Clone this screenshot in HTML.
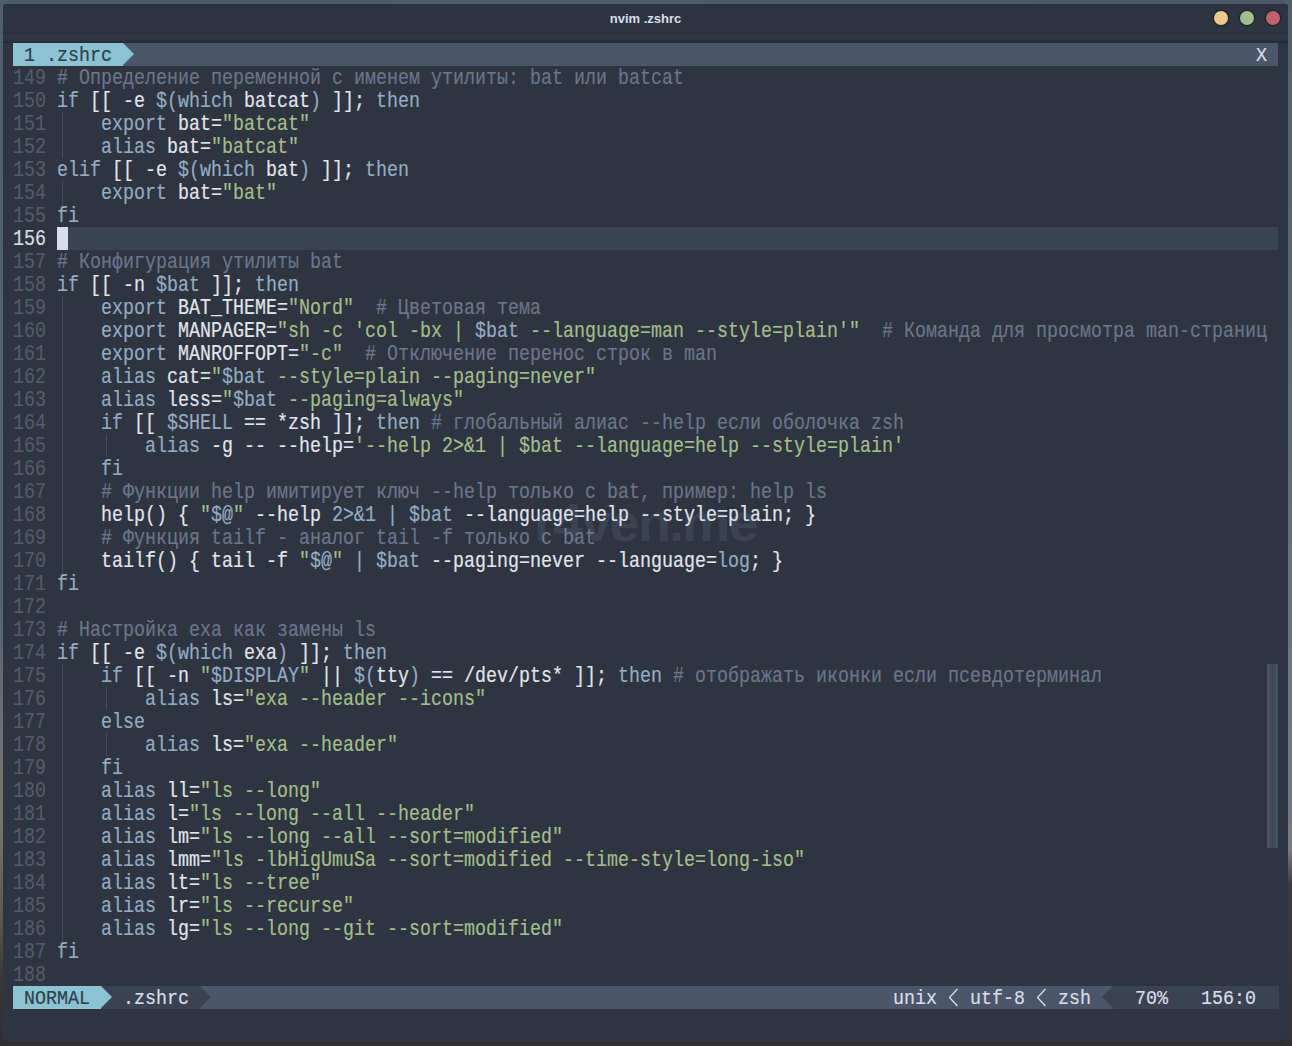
<!DOCTYPE html>
<html><head><meta charset="utf-8">
<style>
html,body{margin:0;padding:0;}
body{width:1292px;height:1046px;overflow:hidden;position:relative;
 background:#2f2d31;
 font-family:"Liberation Mono",monospace;}
.win{position:absolute;left:3px;top:4px;width:1285px;height:1037px;background:#2e3440;border-radius:3px;overflow:hidden;}
.title{position:absolute;left:0;top:0;width:1285px;height:28px;background:linear-gradient(180deg,#2a303e 0,#2e3341 2px,#2f3441 100%);}
.title .t{position:absolute;left:0;width:100%;top:6.5px;text-align:center;font:bold 13px "Liberation Sans",sans-serif;color:#d8dee9;}
.band{position:absolute;left:0;top:28px;width:1285px;height:11px;background:linear-gradient(180deg,#2a2e3b 0,#2a2e3b 1px,#31343f 2px,#2f3440 7px,#2d333e 9px,#262b36 10px);}
.dot{position:absolute;top:7px;width:14px;height:14px;border-radius:50%;box-shadow:0 0 0 1.5px rgba(20,25,30,0.5);}
.abs{position:absolute;}
.ln,.row{position:absolute;left:13px;width:1265px;height:23px;line-height:23px;font-size:21.3px;white-space:pre;color:#e0e5ee;}
.ln .txt{display:inline-block;transform-origin:0 0;transform:scaleX(0.86060);-webkit-text-stroke:0.2px;}
.ln>*, .ln{ }
.txt{position:relative;top:1px;}
.num{color:#535c6e;}
.cur{}
.cur .num{color:#d8dee9;}
.k{color:#94abc3;}
.v{color:#94abc3;}
.s{color:#a3be8c;}
.c{color:#6b768c;}
.g{position:absolute;width:1px;height:23px;background:#434c5e;}
.cursor{position:absolute;left:57px;top:227px;width:11px;height:23px;background:#d8dee9;}
.tabline{position:absolute;left:13px;top:43px;width:1265px;height:23px;background:#4c566a;}
.sl{position:absolute;left:13px;top:986px;width:1266px;height:23px;background:#4c566a;}
.seg{position:absolute;top:0;height:23px;line-height:23px;font-size:21px;white-space:pre;}
.seg .txt{display:inline-block;transform-origin:0 0;transform:scaleX(0.87289);-webkit-text-stroke:0.2px;}
.arr{position:absolute;top:0;width:0;height:0;border-top:11.5px solid transparent;border-bottom:11.5px solid transparent;}
.sb{position:absolute;left:1267px;top:664px;width:11px;height:184px;background:linear-gradient(90deg,#4b5265 0,#4b5265 2px,#434a5c 3px,#434a5c 8px,#4b5265 9px);}
.wm{position:absolute;left:534px;top:491px;font:bold 54px "Liberation Sans",sans-serif;color:rgba(175,195,235,0.11);white-space:pre;letter-spacing:-1.8px;}
</style></head><body>
<div class="abs" style="left:0;top:0;width:1292px;height:6px;background:linear-gradient(90deg,#4a5c69,#4d5d68 50%,#4b5a66)"></div>
<div class="abs" style="left:0;top:0;width:6px;height:1046px;background:linear-gradient(180deg,#4d606c 0,#55636e 600px,#6b6e72 720px,#78746f 820px,#5c5654 920px,#3a3637 980px,#2f2d31 1046px)"></div>
<div class="abs" style="left:1284px;top:0;width:8px;height:1046px;background:linear-gradient(180deg,#4e606d 0,#5a6a77 400px,#6b7580 650px,#6e7882 800px,#7a7a7c 850px,#3c3a3c 885px,#333134 1046px)"></div>
<div class="win">
 <div class="title"><div class="t">nvim .zshrc</div>
  <div class="dot" style="left:1211px;background:#ebcb8b"></div>
  <div class="dot" style="left:1237px;background:#a3be8c"></div>
  <div class="dot" style="left:1263px;background:#bf616a"></div>
 </div>
 <div class="band"></div>
</div>
<div class="tabline">
  <div class="seg" style="left:0;width:110px;background:#8bc3d3;color:#2f404c"><span class="txt"> 1 .zshrc</span></div>
  <div class="arr" style="left:110px;border-left:11px solid #8bc3d3"></div>
  <div class="seg" style="left:1243px;color:#d8dee9"><span class="txt">X</span></div>
</div>
<div class="cur" style="position:absolute;left:57px;top:227px;width:1221px;height:23px;background:#3b4252"></div>
<div class="g" style="left:62px;top:112px"></div>
<div class="g" style="left:62px;top:135px"></div>
<div class="g" style="left:62px;top:181px"></div>
<div class="g" style="left:62px;top:296px"></div>
<div class="g" style="left:62px;top:319px"></div>
<div class="g" style="left:62px;top:342px"></div>
<div class="g" style="left:62px;top:365px"></div>
<div class="g" style="left:62px;top:388px"></div>
<div class="g" style="left:62px;top:411px"></div>
<div class="g" style="left:62px;top:434px"></div>
<div class="g" style="left:62px;top:457px"></div>
<div class="g" style="left:62px;top:480px"></div>
<div class="g" style="left:62px;top:503px"></div>
<div class="g" style="left:62px;top:526px"></div>
<div class="g" style="left:62px;top:549px"></div>
<div class="g" style="left:62px;top:664px"></div>
<div class="g" style="left:62px;top:687px"></div>
<div class="g" style="left:62px;top:710px"></div>
<div class="g" style="left:62px;top:733px"></div>
<div class="g" style="left:62px;top:756px"></div>
<div class="g" style="left:62px;top:779px"></div>
<div class="g" style="left:62px;top:802px"></div>
<div class="g" style="left:62px;top:825px"></div>
<div class="g" style="left:62px;top:848px"></div>
<div class="g" style="left:62px;top:871px"></div>
<div class="g" style="left:62px;top:894px"></div>
<div class="g" style="left:62px;top:917px"></div>
<div class="g" style="left:106px;top:434px"></div>
<div class="g" style="left:106px;top:687px"></div>
<div class="g" style="left:106px;top:733px"></div>
<div class="cursor"></div>
<div class="ln" style="top:66px"><span class="txt"><span class="num">149</span> <span class="c"># Определение переменной с именем утилиты: bat или batcat</span></span></div>
<div class="ln" style="top:89px"><span class="txt"><span class="num">150</span> <span class="k">if</span> [[ -e <span class="v">$(which</span> batcat<span class="v">)</span> ]]; <span class="k">then</span></span></div>
<div class="ln" style="top:112px"><span class="txt"><span class="num">151</span>     <span class="k">export</span> bat=<span class="s">&quot;batcat&quot;</span></span></div>
<div class="ln" style="top:135px"><span class="txt"><span class="num">152</span>     <span class="k">alias</span> bat=<span class="s">&quot;batcat&quot;</span></span></div>
<div class="ln" style="top:158px"><span class="txt"><span class="num">153</span> <span class="k">elif</span> [[ -e <span class="v">$(which</span> bat<span class="v">)</span> ]]; <span class="k">then</span></span></div>
<div class="ln" style="top:181px"><span class="txt"><span class="num">154</span>     <span class="k">export</span> bat=<span class="s">&quot;bat&quot;</span></span></div>
<div class="ln" style="top:204px"><span class="txt"><span class="num">155</span> <span class="k">fi</span></span></div>
<div class="ln cur" style="top:227px"><span class="txt"><span class="num">156</span> </span></div>
<div class="ln" style="top:250px"><span class="txt"><span class="num">157</span> <span class="c"># Конфигурация утилиты bat</span></span></div>
<div class="ln" style="top:273px"><span class="txt"><span class="num">158</span> <span class="k">if</span> [[ -n <span class="v">$bat</span> ]]; <span class="k">then</span></span></div>
<div class="ln" style="top:296px"><span class="txt"><span class="num">159</span>     <span class="k">export</span> BAT_THEME=<span class="s">&quot;Nord&quot;</span>  <span class="c"># Цветовая тема</span></span></div>
<div class="ln" style="top:319px"><span class="txt"><span class="num">160</span>     <span class="k">export</span> MANPAGER=<span class="s">&quot;sh -c &#x27;col -bx | </span><span class="v">$bat</span><span class="s"> --language=man --style=plain&#x27;&quot;</span>  <span class="c"># Команда для просмотра man-страниц</span></span></div>
<div class="ln" style="top:342px"><span class="txt"><span class="num">161</span>     <span class="k">export</span> MANROFFOPT=<span class="s">&quot;-c&quot;</span>  <span class="c"># Отключение перенос строк в man</span></span></div>
<div class="ln" style="top:365px"><span class="txt"><span class="num">162</span>     <span class="k">alias</span> cat=<span class="s">&quot;</span><span class="v">$bat</span><span class="s"> --style=plain --paging=never&quot;</span></span></div>
<div class="ln" style="top:388px"><span class="txt"><span class="num">163</span>     <span class="k">alias</span> less=<span class="s">&quot;</span><span class="v">$bat</span><span class="s"> --paging=always&quot;</span></span></div>
<div class="ln" style="top:411px"><span class="txt"><span class="num">164</span>     <span class="k">if</span> [[ <span class="v">$SHELL</span> == *zsh ]]; <span class="k">then</span> <span class="c"># глобальный алиас --help если оболочка zsh</span></span></div>
<div class="ln" style="top:434px"><span class="txt"><span class="num">165</span>         <span class="k">alias</span> -g -- --help=<span class="s">&#x27;--help 2&gt;&amp;1 | $bat --language=help --style=plain&#x27;</span></span></div>
<div class="ln" style="top:457px"><span class="txt"><span class="num">166</span>     <span class="k">fi</span></span></div>
<div class="ln" style="top:480px"><span class="txt"><span class="num">167</span>     <span class="c"># Функции help имитирует ключ --help только с bat, пример: help ls</span></span></div>
<div class="ln" style="top:503px"><span class="txt"><span class="num">168</span>     help() { <span class="s">&quot;</span><span class="v">$@</span><span class="s">&quot;</span> --help <span class="k">2&gt;&amp;1</span> <span class="k">|</span> <span class="v">$bat</span> --language=help --style=plain; }</span></div>
<div class="ln" style="top:526px"><span class="txt"><span class="num">169</span>     <span class="c"># Функция tailf - аналог tail -f только с bat</span></span></div>
<div class="ln" style="top:549px"><span class="txt"><span class="num">170</span>     tailf() { tail -f <span class="s">&quot;</span><span class="v">$@</span><span class="s">&quot;</span> <span class="k">|</span> <span class="v">$bat</span> --paging=never --language=<span class="k">log</span>; }</span></div>
<div class="ln" style="top:572px"><span class="txt"><span class="num">171</span> <span class="k">fi</span></span></div>
<div class="ln" style="top:595px"><span class="txt"><span class="num">172</span> </span></div>
<div class="ln" style="top:618px"><span class="txt"><span class="num">173</span> <span class="c"># Настройка exa как замены ls</span></span></div>
<div class="ln" style="top:641px"><span class="txt"><span class="num">174</span> <span class="k">if</span> [[ -e <span class="v">$(which</span> exa<span class="v">)</span> ]]; <span class="k">then</span></span></div>
<div class="ln" style="top:664px"><span class="txt"><span class="num">175</span>     <span class="k">if</span> [[ -n <span class="s">&quot;</span><span class="v">$DISPLAY</span><span class="s">&quot;</span> || <span class="v">$(</span>tty<span class="v">)</span> == /dev/pts* ]]; <span class="k">then</span> <span class="c"># отображать иконки если псевдотерминал</span></span></div>
<div class="ln" style="top:687px"><span class="txt"><span class="num">176</span>         <span class="k">alias</span> ls=<span class="s">&quot;exa --header --icons&quot;</span></span></div>
<div class="ln" style="top:710px"><span class="txt"><span class="num">177</span>     <span class="k">else</span></span></div>
<div class="ln" style="top:733px"><span class="txt"><span class="num">178</span>         <span class="k">alias</span> ls=<span class="s">&quot;exa --header&quot;</span></span></div>
<div class="ln" style="top:756px"><span class="txt"><span class="num">179</span>     <span class="k">fi</span></span></div>
<div class="ln" style="top:779px"><span class="txt"><span class="num">180</span>     <span class="k">alias</span> ll=<span class="s">&quot;ls --long&quot;</span></span></div>
<div class="ln" style="top:802px"><span class="txt"><span class="num">181</span>     <span class="k">alias</span> l=<span class="s">&quot;ls --long --all --header&quot;</span></span></div>
<div class="ln" style="top:825px"><span class="txt"><span class="num">182</span>     <span class="k">alias</span> lm=<span class="s">&quot;ls --long --all --sort=modified&quot;</span></span></div>
<div class="ln" style="top:848px"><span class="txt"><span class="num">183</span>     <span class="k">alias</span> lmm=<span class="s">&quot;ls -lbHigUmuSa --sort=modified --time-style=long-iso&quot;</span></span></div>
<div class="ln" style="top:871px"><span class="txt"><span class="num">184</span>     <span class="k">alias</span> lt=<span class="s">&quot;ls --tree&quot;</span></span></div>
<div class="ln" style="top:894px"><span class="txt"><span class="num">185</span>     <span class="k">alias</span> lr=<span class="s">&quot;ls --recurse&quot;</span></span></div>
<div class="ln" style="top:917px"><span class="txt"><span class="num">186</span>     <span class="k">alias</span> lg=<span class="s">&quot;ls --long --git --sort=modified&quot;</span></span></div>
<div class="ln" style="top:940px"><span class="txt"><span class="num">187</span> <span class="k">fi</span></span></div>
<div class="ln" style="top:963px"><span class="txt"><span class="num">188</span> </span></div>
<div class="sb"></div>
<div class="wm">r4ven.me</div>
<div class="sl">
  <div class="seg" style="left:0;width:88px;background:#8bc3d3;color:#2f404c"><span class="txt"> NORMAL</span></div>
  <div class="seg" style="left:88px;width:99px;background:#3b4252;color:#d8dee9"><span class="txt">  .zshrc</span></div>
  <div class="arr" style="left:88px;border-left:11px solid #8bc3d3"></div>
  <div class="arr" style="left:187px;border-left:11px solid #3b4252"></div>
  <div class="seg" style="left:880px;color:#d8dee9"><span class="txt">unix</span></div>
  <div class="seg" style="left:957px;color:#d8dee9"><span class="txt">utf-8</span></div>
  <div class="seg" style="left:1045px;color:#d8dee9"><span class="txt">zsh</span></div>
  <svg class="abs" style="left:935px;top:0" width="11" height="23"><polyline points="9.5,3 1.5,11.5 9.5,20" fill="none" stroke="#d8dee9" stroke-width="1.3"/></svg>
  <svg class="abs" style="left:1023px;top:0" width="11" height="23"><polyline points="9.5,3 1.5,11.5 9.5,20" fill="none" stroke="#d8dee9" stroke-width="1.3"/></svg>
  <div class="seg" style="left:1100px;width:166px;background:#3b4252;color:#d8dee9"><span class="txt">  70%   156:0</span></div>
  <div class="arr" style="left:1089px;border-right:11px solid #3b4252"></div>
</div>
</body></html>
